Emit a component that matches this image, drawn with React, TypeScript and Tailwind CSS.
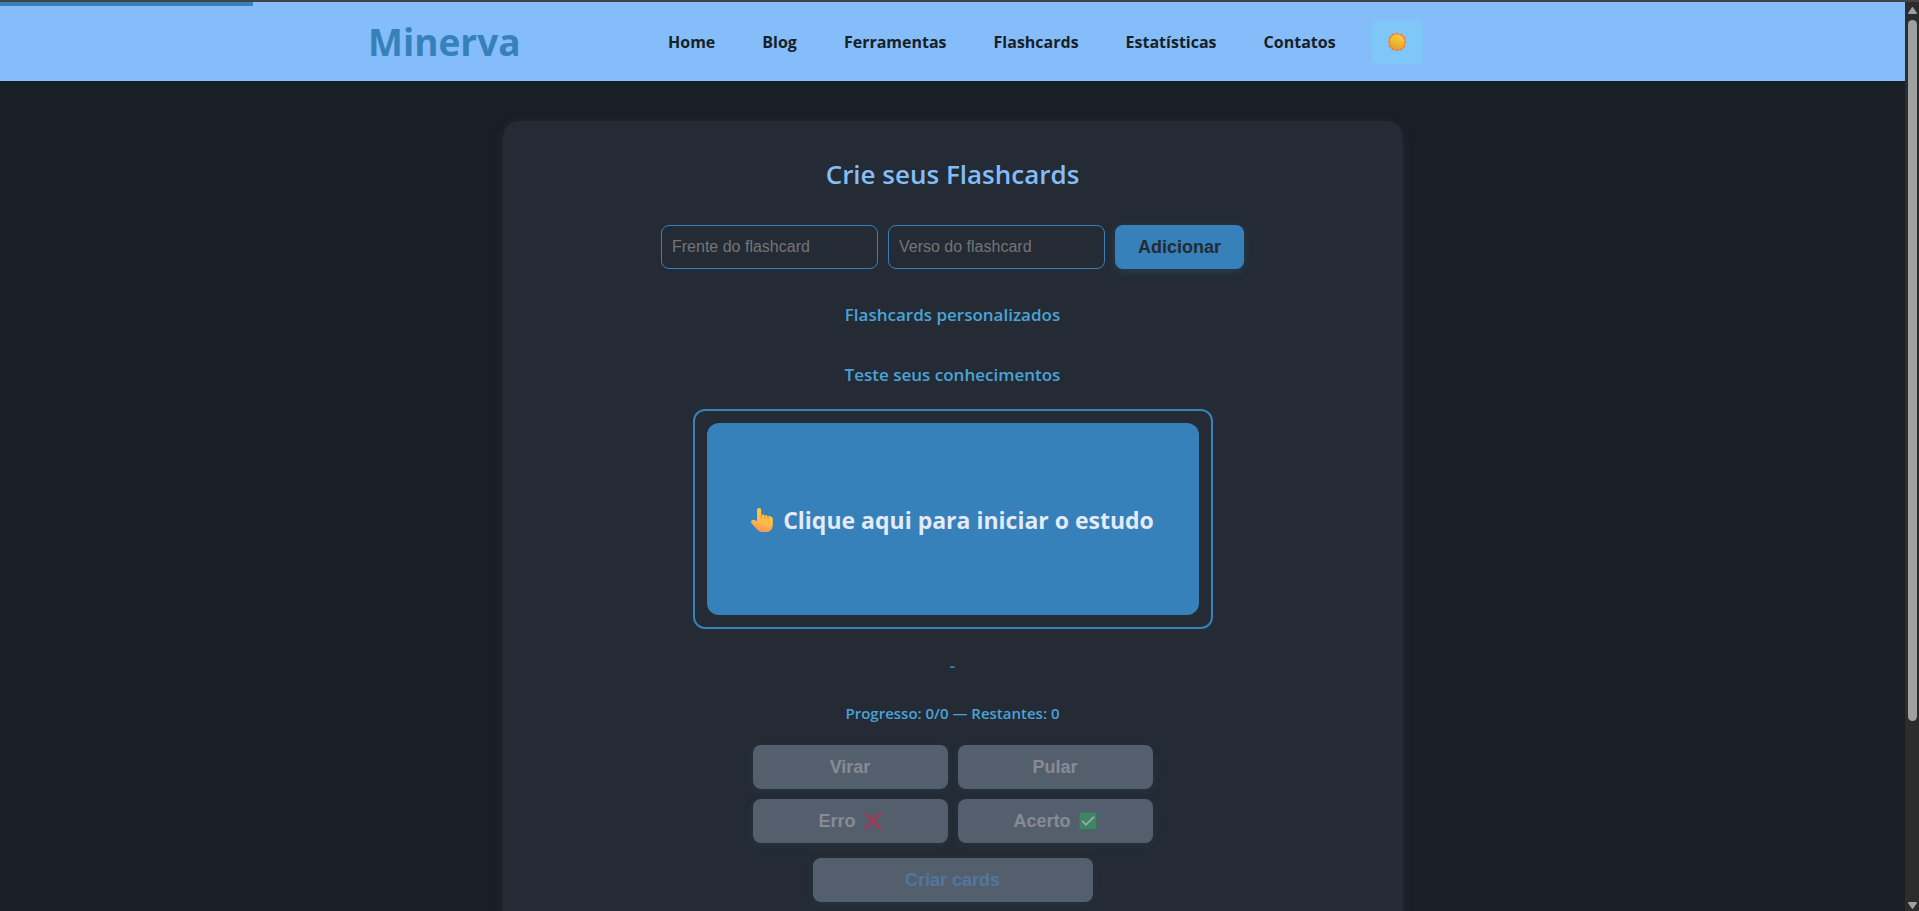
import { useState } from "react";

const links = ["Home", "Blog", "Ferramentas", "Flashcards", "Estatísticas", "Contatos"];

function SunIcon() {
  return (
    <svg viewBox="0 0 20 20" className="h-5 w-5" aria-hidden="true">
      <defs>
        <linearGradient id="sun" x1="0.7" y1="0" x2="0.3" y2="1">
          <stop offset="0" stopColor="#ffd23a" />
          <stop offset="1" stopColor="#dda02c" />
        </linearGradient>
      </defs>
      <path
        d="M10 .3l2.100 1.900 2.800-.6 1 2.500 2.500 1-.6 2.800L19.700 10l-1.900 2.100.6 2.800-2.500 1-1 2.500-2.800-.6L10 19.700l-2.100-1.900-2.800.6-1-2.500-2.500-1 .6-2.800L.3 10l1.900-2.100-.6-2.800 2.500-1 1-2.500 2.800.6z"
        fill="#f5803a"
      />
      <circle cx="10" cy="10" r="7.500" fill="url(#sun)" />
    </svg>
  );
}

function HandIcon() {
  return (
    <svg viewBox="0 0 22 24" className="h-6 w-[22px] shrink-0" aria-hidden="true">
      <defs>
        <linearGradient id="hand" x1="0.7" y1="0" x2="0.4" y2="1">
          <stop offset="0" stopColor="#ffd03b" />
          <stop offset="0.6" stopColor="#ffb84a" />
          <stop offset="1" stopColor="#fb9155" />
        </linearGradient>
      </defs>
      <path
        d="M6 1.900C6 .8 7 0 8.100 0s2.100.9 2.100 1.900v5.200c.7-.9 2.900-.8 3.500.5.900-.7 2.600-.5 3.100.8 1-.5 2.500-.3 3.300.4.900.5 1.700.9 1.700 2v5.600c0 4.500-2.700 7.600-7 7.600h-3.600c-2.700 0-4.100-1.300-5.500-3L.6 15.400C-.4 14.100.1 12.500 1.400 12c1.100-.4 2.300-.1 3.300.6L6 13.500z"
        fill="url(#hand)"
      />
      <path d="M10.300 7v3.300M13.800 7.800v2.700M17 8.600v2.200" stroke="#d98a24" strokeWidth="0.9" strokeLinecap="round" />
    </svg>
  );
}

function CrossIcon() {
  return (
    <svg viewBox="0 0 18 18" className="h-[18px] w-[18px]" aria-hidden="true">
      <path d="M2 2l14 14M16 2L2 16" stroke="#953e57" strokeWidth="3.400" strokeLinecap="round" />
    </svg>
  );
}

function CheckIcon() {
  return (
    <svg viewBox="0 0 18 18" className="h-[18px] w-[18px]" aria-hidden="true">
      <rect x="0.500" y="0.500" width="17" height="17" rx="1" fill="#3f8463" />
      <path d="M17.500 1v16.500H1" stroke="#33735a" fill="none" />
      <path d="M3.600 9.300l3.300 3.600 7.800-7.700" stroke="#a0aeb2" strokeWidth="1.700" fill="none" strokeLinecap="round" />
    </svg>
  );
}

const field =
  "h-11 w-[217px] rounded-lg border border-[#3681b9] bg-transparent px-2.5 font-['Liberation_Sans',sans-serif] text-base text-[#e4eaf7] placeholder:text-[#757575]";
const action =
  "flex h-11 items-center justify-center gap-2 rounded-lg bg-[#545f6e] font-['Liberation_Sans',sans-serif] text-lg font-bold text-[#868b95] shadow-[0_2px_8px_rgba(54,129,185,0.1)]";

export default function App() {
  const [front, setFront] = useState("");
  const [back, setBack] = useState("");

  return (
    <div className="flex h-screen flex-col bg-[#181f26] font-['Open_Sans','Noto_Sans',sans-serif]">
      <div className="h-0.5 shrink-0 bg-[#434343]" />
      <div className="flex min-h-0 flex-1">
        <div className="min-w-0 flex-1 overflow-y-auto [scrollbar-width:none]">
          <header className="relative bg-[#84bdfa]">
            <div className="absolute left-0 top-0 h-1 w-[253px] bg-[#3681b9]" />
            <div className="mx-auto flex h-[79px] max-w-[1169px] items-center">
              <a href="#" className="w-[300px] shrink-0 text-[37px] font-bold text-[#3681b9]">
                Minerva
              </a>
              <nav className="flex items-center gap-[47px] text-base font-bold text-[#181f26]">
                {links.map((link) => (
                  <a key={link} href="#">
                    {link}
                  </a>
                ))}
              </nav>
              <button
                type="button"
                aria-label="Alternar tema"
                className="ml-9 flex h-11 w-[51px] items-center justify-center rounded-md bg-[#80c7f9]"
              >
                <SunIcon />
              </button>
            </div>
          </header>

          <main className="mx-auto mt-10 flex max-w-[900px] flex-col items-center rounded-2xl bg-[#242b34] px-8 pb-20 pt-8 shadow-[0_2px_12px_rgba(54,70,90,0.25)]">
            <h1 className="text-[26px] leading-[42px] font-semibold text-[#84bdfa]">Crie seus Flashcards</h1>
            <form className="mt-[30px] flex gap-2.5" onSubmit={(e) => e.preventDefault()}>
              <input
                className={field}
                aria-label="Frente do flashcard"
                placeholder="Frente do flashcard"
                value={front}
                onChange={(e) => setFront(e.target.value)}
              />
              <input
                className={field}
                aria-label="Verso do flashcard"
                placeholder="Verso do flashcard"
                value={back}
                onChange={(e) => setBack(e.target.value)}
              />
              <button
                type="submit"
                className="h-11 w-[129px] rounded-lg bg-[#3681b9] font-['Liberation_Sans',sans-serif] text-lg font-bold text-[#242b34] shadow-[0_2px_8px_rgba(54,129,185,0.25)]"
              >
                Adicionar
              </button>
            </form>
            <h2 className="mt-8 text-[17px] leading-7 font-semibold text-[#4aa3d8]">Flashcards personalizados</h2>
            <h2 className="mt-8 text-[17px] leading-7 font-semibold text-[#4aa3d8]">Teste seus conhecimentos</h2>
            <section className="mt-5 w-[520px] rounded-xl border-2 border-[#3681b9] p-3">
              <button
                type="button"
                className="flex h-48 w-full items-center justify-center gap-2.5 rounded-xl bg-[#3681b9] pt-0.5 text-[23px] font-bold text-[#e4eaf7]"
              >
                <HandIcon />
                Clique aqui para iniciar o estudo
              </button>
            </section>
            <p className="mt-[22px] text-lg leading-7 font-semibold text-[#3681b9]">-</p>
            <p className="mt-[22px] text-[15px] leading-6 font-semibold text-[#4aa3d8]">Progresso: 0/0 — Restantes: 0</p>
            <div className="mt-5 grid w-[400px] grid-cols-2 gap-2.5">
              <button type="button" disabled className={action}>
                Virar
              </button>
              <button type="button" disabled className={action}>
                Pular
              </button>
              <button type="button" disabled className={action}>
                Erro <CrossIcon />
              </button>
              <button type="button" disabled className={action}>
                Acerto <CheckIcon />
              </button>
            </div>
            <button
              type="button"
              disabled
              className="mt-[15px] h-11 w-[280px] rounded-lg bg-[#545f6e] font-['Liberation_Sans',sans-serif] text-lg font-bold text-[#52779f] shadow-[0_2px_8px_rgba(54,129,185,0.1)]"
            >
              Criar cards
            </button>
          </main>
        </div>

        <div className="flex w-3.5 shrink-0 flex-col items-center bg-[#2c2c2c] pb-0.5 pt-[5px]" aria-hidden="true">
          <svg viewBox="0 0 9 7" className="h-[7px] w-[9px]">
            <path d="M4.500 0Q5 0 5.500 1L9 6Q9 7 8 7H1Q0 7 0 6L3.500 1Q4 0 4.500 0z" fill="#a0a0a0" />
          </svg>
          <div className="mt-1.5 flex min-h-0 flex-1 flex-col">
            <div className="w-[9px] flex-[159] rounded-full bg-[#a0a0a0]" />
            <div className="flex-[41]" />
          </div>
          <svg viewBox="0 0 9 7" className="h-[7px] w-[9px]">
            <path d="M4.500 7Q5 7 5.500 6L9 1Q9 0 8 0H1Q0 0 0 1L3.500 6Q4 7 4.500 7z" fill="#a0a0a0" />
          </svg>
        </div>
      </div>
    </div>
  );
}
